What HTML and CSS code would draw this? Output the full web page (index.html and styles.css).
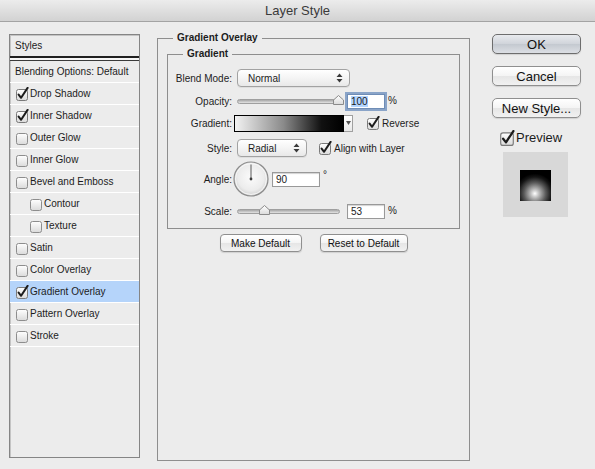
FILE: index.html
```html
<!DOCTYPE html>
<html lang="en">
<head>
    <meta charset="UTF-8">
    <meta name="viewport" content="width=device-width, initial-scale=1.0">
    <title>Layer Style</title>
    <link rel="stylesheet" href="styles.css">
</head>
<body>
    <svg class="defs" width="0" height="0" aria-hidden="true">
        <defs>
            <linearGradient id="box-fill" x1="0" y1="0" x2="0" y2="1">
                <stop offset="0" stop-color="#ffffff"/>
                <stop offset="1" stop-color="#dadada"/>
            </linearGradient>
            <radialGradient id="dial-fill" cx="0.5" cy="0.45" r="0.55">
                <stop offset="0" stop-color="#fbfbfb"/>
                <stop offset="0.7" stop-color="#ececec"/>
                <stop offset="1" stop-color="#cfcfcf"/>
            </radialGradient>
            <symbol id="cb-off" viewBox="0 0 14 14">
                <rect x="1.5" y="2.5" width="11" height="11" rx="2" fill="url(#box-fill)" stroke="#8d8d8d"/>
            </symbol>
            <symbol id="cb-on" viewBox="0 0 14 14">
                <rect x="1.5" y="2.5" width="11" height="11" rx="2" fill="url(#box-fill)" stroke="#7a7a7a"/>
                <path d="M3.6 7.6 L6.1 10.8 L12.6 0.9" fill="none" stroke="#1c1c1c" stroke-width="2" stroke-linecap="round" stroke-linejoin="round"/>
            </symbol>
            <symbol id="updown" viewBox="0 0 7 10">
                <path d="M0.5 4 L3.5 0.5 L6.5 4 Z M0.5 6 L3.5 9.5 L6.5 6 Z" fill="#3a3a3a"/>
            </symbol>
            <symbol id="thumb" viewBox="0 0 11 10">
                <path d="M0.5 9.5 V5 L5.5 0.5 L10.5 5 V9.5 Z" fill="url(#box-fill)" stroke="#8a8a8a"/>
            </symbol>
        </defs>
    </svg>

    <div class="window">
        <div class="titlebar">Layer Style</div>

        <div class="content">
            <div class="styles-panel">
                <div class="panel-head">Styles</div>
                <div class="panel-rule"></div>
                <div class="style-row">Blending Options: Default</div>
                <div class="style-row"><svg class="cb"><use href="#cb-on"/></svg>Drop Shadow</div>
                <div class="style-row"><svg class="cb"><use href="#cb-on"/></svg>Inner Shadow</div>
                <div class="style-row"><svg class="cb"><use href="#cb-off"/></svg>Outer Glow</div>
                <div class="style-row"><svg class="cb"><use href="#cb-off"/></svg>Inner Glow</div>
                <div class="style-row"><svg class="cb"><use href="#cb-off"/></svg>Bevel and Emboss</div>
                <div class="style-row sub"><svg class="cb"><use href="#cb-off"/></svg>Contour</div>
                <div class="style-row sub"><svg class="cb"><use href="#cb-off"/></svg>Texture</div>
                <div class="style-row"><svg class="cb"><use href="#cb-off"/></svg>Satin</div>
                <div class="style-row"><svg class="cb"><use href="#cb-off"/></svg>Color Overlay</div>
                <div class="style-row selected"><svg class="cb"><use href="#cb-on"/></svg>Gradient Overlay</div>
                <div class="style-row"><svg class="cb"><use href="#cb-off"/></svg>Pattern Overlay</div>
                <div class="style-row"><svg class="cb"><use href="#cb-off"/></svg>Stroke</div>
            </div>

            <fieldset class="group">
                <legend>Gradient Overlay</legend>
                <fieldset class="subgroup">
                    <legend>Gradient</legend>
                    <div class="form-grid">
                        <span class="label">Blend Mode:</span>
                        <div class="ctl">
                            <div class="popup blend">Normal<svg class="arrows"><use href="#updown"/></svg></div>
                        </div>

                        <span class="label">Opacity:</span>
                        <div class="ctl">
                            <div class="slider">
                                <div class="track"></div>
                                <svg class="thumb" style="left: 96px"><use href="#thumb"/></svg>
                            </div>
                            <span class="field focused"><span class="sel">100</span></span>
                            <span class="unit">%</span>
                        </div>

                        <span class="label">Gradient:</span>
                        <div class="ctl">
                            <div class="gradient-bar">
                                <div class="ramp"></div>
                                <div class="drop"><svg width="5" height="4"><path d="M0 0 H5 L2.5 4 Z" fill="#555"/></svg></div>
                            </div>
                            <span class="check reverse"><svg class="cb"><use href="#cb-on"/></svg>Reverse</span>
                        </div>

                        <span class="label">Style:</span>
                        <div class="ctl">
                            <div class="popup style">Radial<svg class="arrows"><use href="#updown"/></svg></div>
                            <span class="check align"><svg class="cb"><use href="#cb-on"/></svg>Align with Layer</span>
                        </div>

                        <span class="label">Angle:</span>
                        <div class="ctl">
                            <svg class="dial" width="36" height="36" viewBox="0 0 36 36">
                                <circle cx="18" cy="18" r="17" fill="url(#dial-fill)" stroke="#8c8c8c" stroke-width="1.2"/>
                                <circle cx="18" cy="18" r="15.5" fill="none" stroke="#ffffff" stroke-opacity="0.7"/>
                                <line x1="18" y1="18" x2="18" y2="3.5" stroke="#5a5a5a" stroke-width="1"/>
                                <circle cx="18" cy="18" r="1.4" fill="#3c3c3c"/>
                            </svg>
                            <span class="field angle">90</span>
                            <span class="unit deg">°</span>
                        </div>

                        <span class="label">Scale:</span>
                        <div class="ctl">
                            <div class="slider">
                                <div class="track scale-track"></div>
                                <svg class="thumb" style="left: 22px"><use href="#thumb"/></svg>
                            </div>
                            <span class="field">53</span>
                            <span class="unit">%</span>
                        </div>
                    </div>
                </fieldset>

                <div class="defaults">
                    <button class="btn small make">Make Default</button>
                    <button class="btn small reset">Reset to Default</button>
                </div>
            </fieldset>

            <div class="actions">
                <button class="btn big primary">OK</button>
                <button class="btn big">Cancel</button>
                <button class="btn big">New Style...</button>
                <div class="preview-check"><svg class="cb big-cb"><use href="#cb-on"/></svg>Preview</div>
                <div class="preview-box">
                    <div class="swatch"></div>
                </div>
            </div>
        </div>
    </div>
</body>
</html>
```

FILE: styles.css
```css
body {
    margin: 0;
    font-family: "Liberation Sans", Arial, sans-serif;
    color: #1c1c1c;
    background-color: #ececec;
}

.defs {
    position: absolute;
    width: 0;
    height: 0;
}

.window {
    width: 595px;
    height: 469px;
    background-color: #ececec;
    overflow: hidden;
}

.titlebar {
    height: 21px;
    line-height: 22px;
    text-align: center;
    font-size: 13px;
    color: #3a3a3a;
    background: linear-gradient(#ececec, #d2d2d2);
    border-bottom: 1px solid #a3a3a3;
}

.content {
    display: flex;
    align-items: flex-start;
}

/* left list of styles */
.styles-panel {
    margin: 12px 0 0 9px;
    width: 131px;
    height: 424px;
    box-sizing: border-box;
    border: 1px solid #858585;
    box-shadow: inset 1px 1px 0 #c4c4c4;
    font-size: 10px;
}

.panel-head {
    height: 21px;
    line-height: 21px;
    padding-left: 5px;
    border-bottom: 2px solid #202020;
}

.panel-rule {
    height: 2px;
    background-color: #f6f6f6;
    border-bottom: 1px solid #3a3a3a;
}

.style-row {
    display: flex;
    align-items: center;
    height: 21px;
    padding-left: 5px;
    border-bottom: 1px solid #ffffff;
    white-space: nowrap;
}

.style-row.sub {
    padding-left: 19px;
}

.style-row.selected {
    background-color: #b5d4fa;
}

.cb {
    width: 14px;
    height: 14px;
    margin-right: 1px;
    flex: none;
}

/* gradient overlay group */
fieldset {
    margin: 0;
    padding: 0;
    min-width: 0;
    border: 1px solid #8e8e8e;
}

legend {
    padding: 0 4px;
    margin-left: 15px;
    font-size: 10px;
    font-weight: bold;
    line-height: 12px;
}

.group {
    margin: 10px 0 0 17px;
    width: 313px;
    height: 429px;
    box-sizing: border-box;
}

.subgroup {
    margin: 4px 9px 0 9px;
    padding: 6px 0 2px 0;
}

.form-grid {
    display: grid;
    grid-template-columns: 64px 1fr;
    grid-template-rows: 24px 22px 22px 28px 34px 30px;
    column-gap: 5px;
    font-size: 10px;
}

.label {
    text-align: right;
    align-self: center;
}

.ctl {
    display: flex;
    align-items: center;
}

.popup {
    display: flex;
    align-items: center;
    justify-content: space-between;
    box-sizing: border-box;
    height: 18px;
    padding: 0 6px 0 10px;
    border: 1px solid #a2a2a2;
    border-radius: 4px;
    background: linear-gradient(#ffffff, #f3f3f3 55%, #e8e8e8);
    box-shadow: 0 1px 0 rgba(0, 0, 0, 0.06);
}

.popup.blend {
    width: 113px;
}

.popup.style {
    width: 70px;
}

.arrows {
    width: 7px;
    height: 10px;
}

.slider {
    position: relative;
    width: 106px;
    height: 14px;
    display: flex;
    align-items: center;
}

.track {
    width: 100px;
    height: 3px;
    border: 1px solid #9f9f9f;
    border-radius: 3px;
    background: linear-gradient(#a6a6a6, #e4e4e4);
}

.scale-track {
    width: 101px;
}

.thumb {
    position: absolute;
    top: 1px;
    width: 11px;
    height: 10px;
}

.field {
    box-sizing: border-box;
    width: 38px;
    height: 15px;
    line-height: 13px;
    margin-left: 4px;
    padding-left: 3px;
    border: 1px solid #999999;
    background-color: #ffffff;
    box-shadow: inset 0 1px 1px rgba(0, 0, 0, 0.18);
}

.field.focused {
    box-shadow: 0 0 0 2px #8aa4c8;
    border-color: #6f8db6;
}

.sel {
    background-color: #b3d5ff;
}

.field.angle {
    width: 48px;
    height: 15px;
    margin-left: 3px;
}

.unit {
    margin-left: 3px;
    margin-bottom: 2px;
}

.unit.deg {
    align-self: flex-start;
    margin-top: 7px;
}

.gradient-bar {
    display: flex;
    width: 119px;
    height: 17px;
    margin-left: -3px;
}

.ramp {
    flex: 1;
    border: 1px solid #000000;
    background: linear-gradient(to right, #f2f2f2, #8a8a8a 45%, #111111 80%, #000000);
}

.drop {
    width: 8px;
    display: flex;
    align-items: center;
    justify-content: center;
    border: 1px solid #a0a0a0;
    border-left: none;
    background: linear-gradient(#ffffff, #e8e8e8);
}

.check {
    display: flex;
    align-items: center;
}

.check .cb {
    margin-right: 2px;
}

.reverse {
    margin-left: 13px;
}

.align {
    margin-left: 11px;
}

.dial {
    margin-left: -4px;
}

/* buttons */
.btn {
    font-family: inherit;
    color: #111111;
    padding: 0;
    border: 1px solid #8f8f8f;
    border-radius: 4px;
    background: linear-gradient(#ffffff, #f4f4f4 50%, #e6e6e6 52%, #f1f1f1);
    box-shadow: 0 1px 1px rgba(0, 0, 0, 0.12);
}

.btn.small {
    height: 18px;
    font-size: 10px;
}

.btn.make {
    width: 82px;
}

.btn.reset {
    width: 88px;
}

.defaults {
    display: flex;
    justify-content: center;
    gap: 18px;
    margin-top: 5px;
}

.actions {
    display: flex;
    flex-direction: column;
    margin: 12px 0 0 22px;
    width: 89px;
}

.btn.big {
    height: 20px;
    font-size: 13px;
    margin-bottom: 12px;
    border-radius: 5px;
}

.btn.primary {
    border-color: #6d6d6d;
    background: linear-gradient(#e8eaee, #d0d4da 50%, #c4c9d0 52%, #dcdfe4);
}

.preview-check {
    display: flex;
    align-items: center;
    height: 15px;
    margin-top: 0;
    padding-left: 7px;
    font-size: 13px;
}

.big-cb {
    width: 16px;
    height: 16px;
    margin-right: 1px;
}

.preview-box {
    display: flex;
    align-items: center;
    justify-content: center;
    width: 65px;
    height: 65px;
    margin: 7px 0 0 11px;
    background-color: #d8d8d8;
}

.swatch {
    width: 31px;
    height: 31px;
    margin-top: 2px;
    background: radial-gradient(circle at 48% 76%, #ffffff 0, #c8c8c8 12%, #5a5a5a 38%, #151515 58%, #000000 70%);
}
```
